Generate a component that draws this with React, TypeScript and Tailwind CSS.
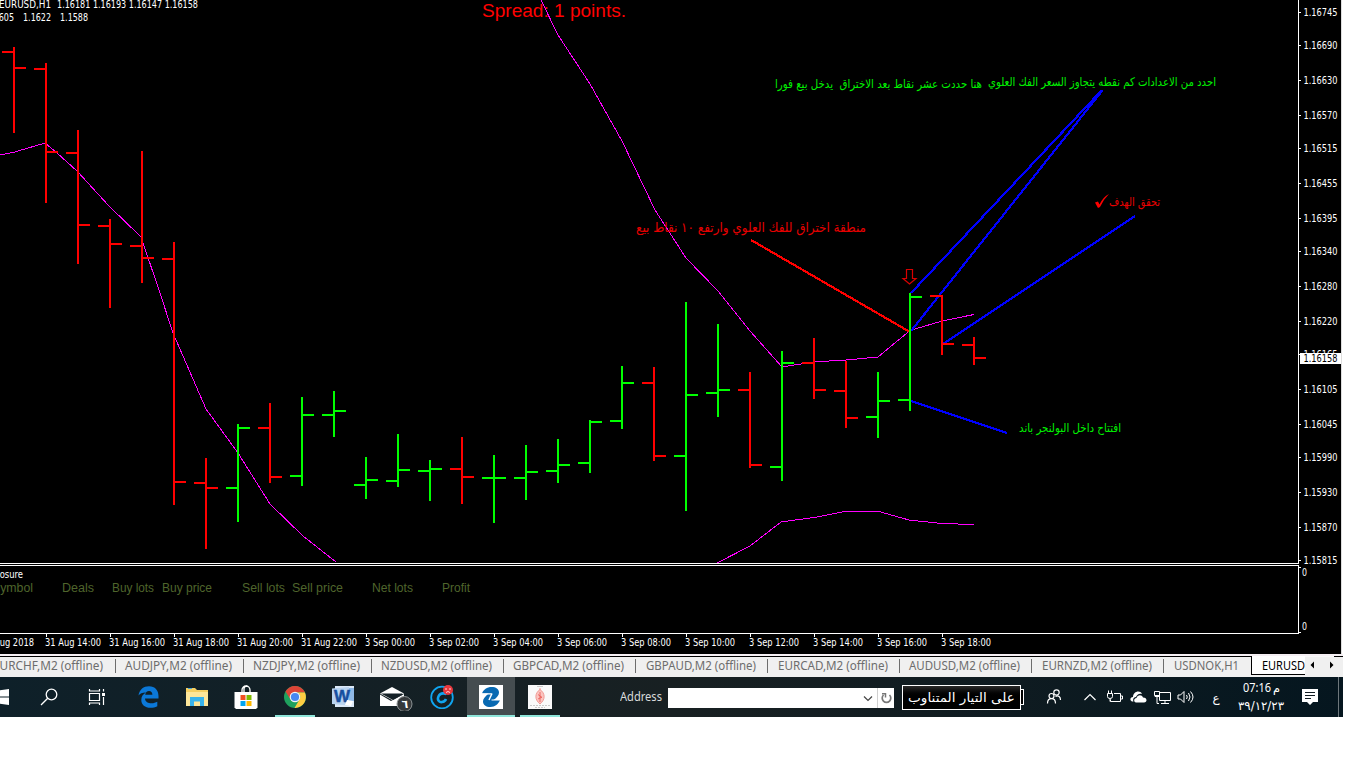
import type { ReactNode } from 'react';

type Bar = [number, number, number, number, number, 'up' | 'down'];

// x, high, low, open, close
const bars: Bar[] = [
  [13, 47, 133, 51, 67, 'down'],
  [45, 63, 203, 68, 151, 'down'],
  [77, 130, 264, 152, 224, 'down'],
  [109, 219, 308, 225, 243, 'down'],
  [141, 151, 283, 245, 257, 'down'],
  [173, 242, 505, 258, 481, 'down'],
  [205, 458, 549, 482, 487, 'down'],
  [237, 424, 522, 487, 427, 'up'],
  [269, 403, 483, 427, 476, 'down'],
  [301, 397, 486, 475, 414, 'up'],
  [333, 391, 437, 414, 410, 'up'],
  [365, 457, 499, 484, 479, 'up'],
  [397, 434, 487, 480, 469, 'up'],
  [429, 460, 501, 470, 468, 'up'],
  [461, 437, 504, 468, 476, 'down'],
  [493, 455, 523, 477, 477, 'up'],
  [525, 445, 500, 477, 471, 'up'],
  [557, 439, 483, 470, 464, 'up'],
  [589, 420, 473, 462, 421, 'up'],
  [621, 366, 429, 420, 382, 'up'],
  [653, 367, 461, 382, 455, 'down'],
  [685, 302, 511, 455, 394, 'up'],
  [717, 324, 417, 392, 389, 'up'],
  [749, 372, 468, 389, 464, 'down'],
  [781, 351, 481, 466, 362, 'up'],
  [813, 338, 399, 362, 389, 'down'],
  [845, 361, 428, 390, 417, 'down'],
  [877, 372, 438, 416, 400, 'up'],
  [909, 293, 411, 399, 296, 'up'],
  [941, 295, 355, 295, 343, 'down'],
  [973, 337, 365, 344, 357, 'down'],
];

const prices: [string, number][] = [
  ['1.16745', 12],
  ['1.16690', 45],
  ['1.16630', 80],
  ['1.16570', 115],
  ['1.16515', 148],
  ['1.16455', 183],
  ['1.16395', 218],
  ['1.16340', 251],
  ['1.16280', 286],
  ['1.16220', 321],
  ['1.16165', 354],
  ['1.16105', 389],
  ['1.16045', 424],
  ['1.15990', 457],
  ['1.15930', 492],
  ['1.15870', 527],
  ['1.15815', 560],
];

const times: [string, number][] = [
  ['31 Aug 14:00', 56],
  ['31 Aug 16:00', 56],
  ['31 Aug 18:00', 56],
  ['31 Aug 20:00', 56],
  ['31 Aug 22:00', 56],
  ['3 Sep 00:00', 50],
  ['3 Sep 02:00', 50],
  ['3 Sep 04:00', 50],
  ['3 Sep 06:00', 50],
  ['3 Sep 08:00', 50],
  ['3 Sep 10:00', 50],
  ['3 Sep 12:00', 50],
  ['3 Sep 14:00', 50],
  ['3 Sep 16:00', 50],
  ['3 Sep 18:00', 50],
];

const columns: [string, number, number][] = [
  ['Symbol', -8, 41],
  ['Deals', 62, 32],
  ['Buy lots', 112, 42],
  ['Buy price', 162, 50],
  ['Sell lots', 242, 43],
  ['Sell price', 292, 51],
  ['Net lots', 372, 41],
  ['Profit', 442, 28],
];

const tabs: [string, number, number][] = [
  ['EURCHF,M2 (offline)', -7, 110],
  ['AUDJPY,M2 (offline)', 125, 107],
  ['NZDJPY,M2 (offline)', 253, 107],
  ['NZDUSD,M2 (offline)', 381, 111],
  ['GBPCAD,M2 (offline)', 513, 111],
  ['GBPAUD,M2 (offline)', 646, 110],
  ['EURCAD,M2 (offline)', 778, 110],
  ['AUDUSD,M2 (offline)', 909, 111],
  ['EURNZD,M2 (offline)', 1042, 110],
  ['USDNOK,H1', 1174, 65],
];

const tabEdges = [0, 116, 244, 372, 504, 636, 768, 900, 1032, 1164, 1251];

type LabelProps = { x: number; y: number; w: number; className?: string; children: string };

function Label({ x, y, w, className = 'fill-white text-[10px]', children }: LabelProps) {
  return (
    <text x={x} y={y} textLength={w} lengthAdjust="spacingAndGlyphs" className={className} xmlSpace="preserve">
      {children}
    </text>
  );
}

function Chart() {
  return (
    <svg width="1341" height="654" className="block shrink-0 bg-black font-['DejaVu_Sans_Condensed','DejaVu_Sans',sans-serif]">
      <Label x={482} y={17} w={144} className="fill-[#ff0000] text-[19px] font-['Liberation_Sans',sans-serif]">
        Spread: 1 points.
      </Label>

      <g shapeRendering="crispEdges" fill="none" stroke="#ff00ff">
        <polyline points="0,155 13,152.5 45,143 57,153 77,171 109,206 141,237 159,290 173,333 206,409 238,453 270,504 303,536 336,562" />
        <polyline points="541,0 558,35 590,84 622,141 655,210 686,258 718,291 750,331 782,367 813,362 846,360 878,357 910,330.5 942,321 974,314.5" />
        <polyline points="717,563 750,546 781,522 817,517 845,511.5 879,511.5 909,520 942,523.5 974,524.5" />
      </g>

      <g shapeRendering="crispEdges" stroke="#0000ff" strokeWidth="2.2">
        <line x1="911" y1="293" x2="1102" y2="90" />
        <line x1="911" y1="331" x2="1102" y2="91" />
        <line x1="943" y1="344" x2="1135" y2="216" />
        <line x1="911" y1="401" x2="1007" y2="433" />
        <line x1="751" y1="240" x2="910" y2="332" stroke="#ff0000" />
      </g>

      {bars.map(([x, high, low, open, close, dir]) => (
        <g key={x} shapeRendering="crispEdges" fill={dir === 'up' ? '#00ff00' : '#ff0000'}>
          <rect x={x} y={high} width="2" height={low - high} />
          <rect x={x - 11} y={open} width="11" height="2" />
          <rect x={x + 2} y={close} width="11" height="2" />
        </g>
      ))}

      <path d="M906.500 269.500h6v9h3.500l-6.500 5.500l-6.500-5.500h3.500z" fill="none" stroke="#d80000" strokeWidth="1.200" />

      <Label x={988} y={86} w={228} className="fill-[#00f000] text-[12px]">
        احدد من الاعدادات كم نقطه يتجاوز السعر الفك العلوي
      </Label>
      <Label x={775} y={88} w={207} className="fill-[#00f000] text-[12px]">
        هنا حددت عشر نقاط بعد الاختراق  يدخل بيع فورا
      </Label>
      <Label x={636} y={232} w={230} className="fill-[#e80000] text-[13px]">
        منطقة اختراق للفك العلوي وارتفع ١٠ نقاط بيع
      </Label>
      <Label x={1109} y={206} w={51} className="fill-[#e80000] text-[12px]">
        تحقق الهدف
      </Label>
      <path d="M1095 202.500l3-1 1.500 3q3.500-7.500 9.500-10.500q-6 6-9 13l-2 1z" fill="#ff0000" />
      <Label x={1019} y={432} w={102} className="fill-[#00f000] text-[12px]">
        افتتاح داخل البولنجر باند
      </Label>

      <Label x={-1} y={8} w={52}>EURUSD,H1</Label>
      <Label x={57} y={8} w={141}>1.16181 1.16193 1.16147 1.16158</Label>
      <Label x={-14} y={21} w={28}>1.1605</Label>
      <Label x={23} y={21} w={28}>1.1622</Label>
      <Label x={60} y={21} w={28}>1.1588</Label>

      <g shapeRendering="crispEdges" fill="#ffffff">
        <rect x="0" y="563" width="1299" height="1" />
        <rect x="0" y="565" width="1299" height="1" />
        <rect x="0" y="633" width="1299" height="1" />
        <rect x="1298" y="0" width="1" height="564" />
        <rect x="1298" y="565" width="1" height="69" />
        {prices.map(([price, y]) => (
          <rect key={price} x="1299" y={y} width="2" height="1" />
        ))}
        <rect x="1299" y="567" width="2" height="1" />
        <rect x="1299" y="632" width="2" height="1" />
        {times.map(([time], i) => (
          <rect key={time} x={46 + i * 64} y="634" width="1" height="3" />
        ))}
      </g>

      {prices.map(([price, y]) => (
        <Label key={price} x={1303.5} y={y + 4} w={34}>{price}</Label>
      ))}
      <rect x="1300" y="353" width="41" height="11" fill="#ffffff" />
      <Label x={1303.5} y={362} w={34} className="fill-black text-[10px]">1.16158</Label>
      <Label x={1302} y={576} w={5}>0</Label>
      <Label x={1302} y={630} w={5}>0</Label>

      <Label x={-16} y={578} w={39}>Exposure</Label>
      {columns.map(([name, x, w]) => (
        <Label key={name} x={x} y={592} w={w} className="fill-[#4f652c] text-[12px] font-['Liberation_Sans',sans-serif]">
          {name}
        </Label>
      ))}
      <Label x={-6} y={646} w={40}>Aug 2018</Label>
      {times.map(([time, w], i) => (
        <Label key={time} x={45 + i * 64} y={646} w={w}>{time}</Label>
      ))}
    </svg>
  );
}

function TabText({ w, x, className, children }: { w: number; x: number; className: string; children: string }) {
  return (
    <svg width={w + x} height="18" className="block shrink-0 overflow-visible font-['Noto_Sans',sans-serif]">
      <Label x={x} y={13} w={w} className={className}>{children}</Label>
    </svg>
  );
}

function TabStrip() {
  return (
    <div className="flex h-[21px] w-[1343px] overflow-hidden bg-[#f0f0f0]">
      <div className="flex w-[1251px] shrink-0 border-t border-black">
        {tabs.map(([name, x, w], i) => (
          <div key={name} className="flex shrink-0" style={{ width: tabEdges[i + 1] - tabEdges[i] }}>
            <TabText x={x - tabEdges[i]} w={w} className="fill-[#6d6d6d] text-[12px]">{name}</TabText>
            {i < 9 && <div className="mt-[2px] ml-auto h-[14px] w-px bg-[#6d6d6d]" />}
          </div>
        ))}
      </div>
      <div className="flex h-[19px] w-[54px] overflow-hidden border-b border-l border-black bg-white pt-px">
        <TabText x={10} w={43} className="fill-black text-[12px]">EURUSD</TabText>
      </div>
      <svg width="38" height="20" className="block shrink-0">
        <path d="M0 0h29" stroke="#fff" />
        <path d="M29 .5h9" stroke="#000" />
        <path d="M9 5.500v7L5.500 9zM25 5.500v7L28.500 9z" fill="#000" />
      </svg>
    </div>
  );
}

function Slot({ className = '', children }: { className?: string; children: ReactNode }) {
  return <div className={`relative flex h-10 w-12 shrink-0 items-center justify-center ${className}`}>{children}</div>;
}

function Underline({ className }: { className: string }) {
  return <div className={`absolute bottom-0 h-[2px] bg-[#8fe6da] ${className}`} />;
}

function TaskButtons() {
  return (
    <div className="flex gap-px">
      <div className="flex h-10 w-[23px] items-center">
        <svg width="9" height="16">
          <path d="M0 1.300L9 0v7.500H0zM0 8.500h9V16l-9-1.300z" fill="#fff" />
        </svg>
      </div>
      <Slot className="pl-[2px]">
        <svg width="18" height="18" fill="none" stroke="#fff" strokeWidth="1.3">
          <circle cx="11.500" cy="6.500" r="5.300" />
          <path d="M7.700 10.300L1 17" />
        </svg>
      </Slot>
      <Slot>
        <svg width="18" height="18" fill="none" stroke="#fff" strokeWidth="1.2">
          <path d="M1.500 5.500h10v7h-10zM1.500 1v2h10V1M1.500 17v-2h10v2M15.500 1v2.500M15.500 9v8" />
          <path d="M14 5h3v3h-3z" fill="#fff" stroke="none" />
        </svg>
      </Slot>
      <Slot className="ml-[2px]">
        <svg width="21" height="22" viewBox="0 0 21 22">
          <path
            d="M.5 9.500C1.500 3.500 5.500.3 11 .3c6 0 9.500 4.200 9.500 9.700v2.500H7c.2 3.500 3.300 4.800 6.500 4.800 2.200 0 4.200-.6 5.800-1.500v4.500c-2 1-4.300 1.500-6.800 1.500-5.500 0-9.200-3-9.200-7.800 0-3.200 1.700-5.800 4.600-7.400C4.500 6.500 2 7.500.5 9.500zM7.200 8.700h7.200c0-2.300-1.300-3.700-3.400-3.700-2 0-3.500 1.500-3.800 3.700z"
            fill="#0b78d8"
          />
        </svg>
      </Slot>
      <Slot>
        <svg width="22" height="20" viewBox="0 0 22 20">
          <path d="M0 1h9l2 2h11v16H0z" fill="#f5cf62" />
          <path d="M0 5h22v14H0z" fill="#fde69a" />
          <path d="M4 19v-9h14v9h-4v-4.500H8V19z" fill="#38b3ec" />
          <path d="M2 1.500h4" stroke="#45a5d8" />
        </svg>
      </Slot>
      <Slot>
        <svg width="24" height="24" viewBox="0 0 24 24">
          <path d="M8 8V5a4 4 0 0 1 8 0v3M10 7V4a3 3 0 0 1 3-3" fill="none" stroke="#fff" strokeWidth="1.3" />
          <path d="M.5 7h23v16h-1v1h-21v-1h-1z" fill="#fff" />
          <path d="M6.500 10h5v5h-5z" fill="#f25022" />
          <path d="M12.500 10h5v5h-5z" fill="#7fba00" />
          <path d="M6.500 16h5v5h-5z" fill="#00a4ef" />
          <path d="M12.500 16h5v5h-5z" fill="#ffb900" />
        </svg>
      </Slot>
      <Slot>
        <svg width="22" height="22" viewBox="0 0 22 22">
          <circle cx="11" cy="11" r="11" fill="#1fa15d" />
          <path d="M1.500 5.500A11 11 0 0 1 20.500 5.500L21 6.500H11A5 5 0 0 0 6.500 13.500z" fill="#dc4437" />
          <path d="M20.900 6.500A11 11 0 0 1 10.500 22L15.500 13.500A5 5 0 0 0 13.500 6.500z" fill="#ffcd42" />
          <circle cx="11" cy="11" r="5.300" fill="#f4f4f4" />
          <circle cx="11" cy="11" r="4.100" fill="#4688f1" />
        </svg>
        <Underline className="left-1 w-10" />
      </Slot>
      <Slot className="pr-[2px]">
        <svg width="23" height="22" viewBox="0 0 23 22">
          <path d="M3 0h19v21H3z" fill="#dce9f8" />
          <path d="M0 2.500L17 1v18.500L0 18z" fill="#b9d4f1" />
          <path d="M17 2h5v13h-5z" fill="#8fb8e6" />
          <text x="2" y="16" textLength="16" lengthAdjust="spacingAndGlyphs" className="fill-[#164fa0] stroke-[#164fa0] stroke-[0.5px] font-['Liberation_Sans',sans-serif] text-[17px] font-bold">
            W
          </text>
          <path d="M15 14l6 1-2 5-6-1z" fill="#fff" />
        </svg>
      </Slot>
      <Slot>
        <svg width="36" height="28" viewBox="0 0 36 28" className="ml-[6px]">
          <path d="M2 10.500L14 4l12 6.500L14 17z" fill="#fff" />
          <path d="M2 11.500L13 18l13-7v12H2z" fill="#fff" />
          <path d="M3 10.500L15 17 25 11.500 24 10.500z" fill="#152127" />
          <circle cx="26.500" cy="21" r="7.500" fill="#35393b" stroke="#8d9395" />
          <text x="23.500" y="25" className="fill-white font-['DejaVu_Sans',sans-serif] text-[11px] font-bold">٦</text>
        </svg>
      </Slot>
      <Slot>
        <svg width="24" height="24" viewBox="0 0 24 24">
          <circle cx="12" cy="12.500" r="10.800" fill="none" stroke="#10a5f0" strokeWidth="1.800" />
          <path d="M16.500 9.500c-1-1.500-6-2-7.800 1.500-2 3.800.3 6.500 3.300 6 2-.3 3.500-1.500 4-3" fill="none" stroke="#10a5f0" strokeWidth="2.600" />
          <circle cx="18" cy="5" r="5" fill="#e8383e" />
          <path d="M15 4h2M19 4h2M16 7.500q2-2 4 0" fill="none" stroke="#ffd5d5" />
        </svg>
      </Slot>
      <Slot className="bg-[#454d50]">
        <svg width="24" height="24" viewBox="0 0 24 24" className="bg-white">
          <path
            d="M3 8.500C4.500 4.500 8 2 12.500 2c4.500 0 7.500 2 7.500 5.500 0 2.500-2 5-5.500 7.500H21c-1.500 4-5 7-9.500 7-4.500 0-7.500-2-7.500-5.500 0-2.500 2-5 5.500-8z"
            fill="#0869b2"
          />
          <path d="M3 8.800h9.500M21 15h-8.500" stroke="#fff" strokeWidth="1.200" />
          <path d="M13 8.500L10 15" stroke="#fff" strokeWidth="1.500" />
        </svg>
        <Underline className="left-0 w-12" />
      </Slot>
      <Slot>
        <svg width="24" height="24" viewBox="0 0 24 24" className="bg-[#fafafa]">
          <path d="M9 1.500h6" stroke="#c9c9c9" />
          <path d="M12 3v2M12 4.500c5.500 4 5.500 10 0 14.500-5.500-4.500-5.500-10.500 0-14.500z" fill="#fbc4c0" stroke="#f19a94" />
          <path d="M12 7v10M10 9.500l4 3M10 14l4-2" stroke="#e9564f" strokeWidth=".8" />
          <path d="M2 20.500h20M7 22.500h10" stroke="#c9c9c9" strokeDasharray="2 1" />
        </svg>
        <Underline className="left-1 w-10" />
      </Slot>
    </div>
  );
}

function AddressBar() {
  return (
    <div className="ml-14 flex h-10 items-center">
      <svg width="48" height="20">
        <Label x={0} y={14} w={42} className="fill-[#d9dcdd] font-['Noto_Sans',sans-serif] text-[12px]">
          Address
        </Label>
      </svg>
      <div className="mt-[2px] flex h-5 w-[226px] items-center bg-white">
        <svg width="226" height="20" fill="none">
          <path d="M196 8.500l4 4 4-4" stroke="#444" strokeWidth="1.200" />
          <path d="M209.500 0v20" stroke="#d0d0d0" />
          <path d="M221.500 7a4.300 4.300 0 1 1-6 0" stroke="#777" strokeWidth="1.700" />
          <path d="M214 5.800h3.500v3.700" stroke="#777" strokeWidth="1.500" />
        </svg>
      </div>
    </div>
  );
}

function Tray() {
  return (
    <div className="flex h-10 items-center">
      <div className="ml-2 flex h-[25px] w-[119px] items-center justify-center border border-white bg-gradient-to-b from-[#2b2b2b] to-black to-50%">
        <svg width="107" height="22">
          <Label x={0} y={16} w={107} className="fill-white font-['DejaVu_Sans',sans-serif] text-[12.500px]">
            على التيار المتناوب
          </Label>
        </svg>
      </div>
      <div className="h-4 w-[3px] border-y border-r border-white bg-black" />
      <Slot className="ml-[18px] w-6!">
        <svg width="16" height="16" fill="none" stroke="#fff" strokeWidth="1.200">
          <circle cx="5.500" cy="7" r="2.500" />
          <path d="M1.500 14.500c0-6.500 8-6.500 8 0" />
          <circle cx="10.500" cy="3.500" r="2.700" />
          <path d="M9.500 7.500c3-1.500 5 .5 5 3.500" />
        </svg>
      </Slot>
      <Slot className="ml-3 w-6!">
        <svg width="14" height="8" fill="none" stroke="#fff" strokeWidth="1.200">
          <path d="M1.500 7L7 1.500 12.500 7" />
        </svg>
      </Slot>
      <Slot className="w-6!">
        <svg width="17" height="14" fill="none" stroke="#fff">
          <path d="M8 3.500h6.500v8h-10v-2M14.500 6h2v3h-2M1.500 3.500h5v3q0 2-2.500 2t-2.500-2zM2.500 3V.5M5.500 3V.5M4 8.500v3" />
        </svg>
      </Slot>
      <Slot className="w-6!">
        <svg width="17" height="12" viewBox="0 0 17 12">
          <path d="M2 10.500C-.5 9.500 0 6 3 6c0-5.500 7-7.500 9-3-3-1-5 .5-6 3-2.500 0-3.500 2.500-2.500 4.500z" fill="#fff" />
          <path d="M6 11.500c-2.500-.5-2.500-4 .5-4.500C7.500 3.500 12 3.500 13 6.500c4.500 0 4.500 5 1 5z" fill="#fff" />
        </svg>
      </Slot>
      <Slot className="w-6!">
        <svg width="17" height="15" fill="none" stroke="#fff">
          <path d="M5.500 2.500h11v8h-11zM11 10.500v3M7 13.500h8M.5 1.500h5v4h-5zM3 5.500v8h2" />
          <path d="M1 5.500h4v1H1z" fill="#fff" />
        </svg>
      </Slot>
      <Slot className="w-6!">
        <svg width="18" height="14" fill="none" stroke="#fff">
          <path d="M1 5h2.500L7 1.500v11L3.500 9H1zM9.500 5q1.500 2 0 4M11.500 3q3 4 0 8M13.500 1.500q5 5.500 0 11" />
        </svg>
      </Slot>
      <span className="w-9 pt-[2px] text-center font-['DejaVu_Sans',sans-serif] text-[12px] leading-4 text-white">ع</span>
      <svg width="54" height="40" className="block">
        <Label x={9} y={15} w={28} className="fill-white font-['Noto_Sans',sans-serif] text-[12px]">07:16</Label>
        <Label x={39} y={15} w={7} className="fill-white font-['DejaVu_Sans',sans-serif] text-[12px]">م</Label>
        <text
          x="4"
          y="33"
          textLength="46"
          lengthAdjust="spacingAndGlyphs"
          className="fill-white font-['DejaVu_Sans',sans-serif] text-[12px] [direction:ltr] [unicode-bidi:bidi-override]"
        >
          ٣٩/١٢/٢٣
        </text>
      </svg>
      <Slot className="w-11!">
        <svg width="16" height="16">
          <path d="M0 0h16v13h-5l-3 3-3-3H0z" fill="#fff" />
          <path d="M3 3.500h10M3 6.500h10M3 9.500h6" stroke="#101b22" />
        </svg>
      </Slot>
      <div className="ml-[6px] h-10 w-px bg-[#6d777c]" />
    </div>
  );
}

function App() {
  return (
    <div className="h-[768px] w-[1366px] overflow-hidden bg-white">
      <div className="flex h-[654px] w-[1342px] border-r border-[#dedede]">
        <Chart />
      </div>
      <div className="h-[2px] w-[1343px] bg-[#f5eff3]" />
      <TabStrip />
      <div className="flex h-10 w-[1343px] bg-gradient-to-r from-[#0e2029] via-[#182022] to-[#05161f]">
        <TaskButtons />
        <AddressBar />
        <Tray />
      </div>
    </div>
  );
}

export default App;
